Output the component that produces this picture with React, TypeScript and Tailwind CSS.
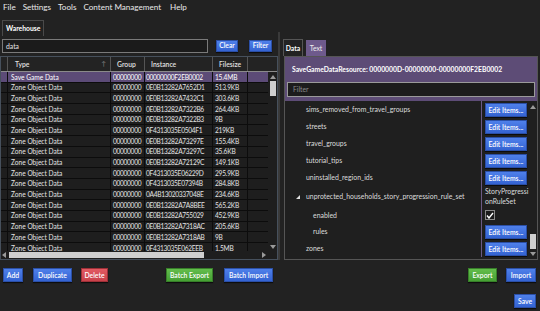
import React from "react";

const rows: [string, string, string, string][] = [
  ["Save Game Data", "00000000", "00000000F2EB0002", "15.4MB"],
  ["Zone Object Data", "00000000", "0E0B13282A7652D1", "513.9KB"],
  ["Zone Object Data", "00000000", "0E0B13282A7432C1", "303.6KB"],
  ["Zone Object Data", "00000000", "0E0B13282A7322B6", "264.4KB"],
  ["Zone Object Data", "00000000", "0E0B13282A7322B3", "9B"],
  ["Zone Object Data", "00000000", "0F4313035E0504F1", "219KB"],
  ["Zone Object Data", "00000000", "0E0B13282A73297E", "155.4KB"],
  ["Zone Object Data", "00000000", "0E0B13282A73297C", "35.6KB"],
  ["Zone Object Data", "00000000", "0E0B13282A72129C", "149.1KB"],
  ["Zone Object Data", "00000000", "0F4313035E06229D", "295.9KB"],
  ["Zone Object Data", "00000000", "0F4313035E07394B", "284.8KB"],
  ["Zone Object Data", "00000000", "0A4B13020337048E", "234.6KB"],
  ["Zone Object Data", "00000000", "0E0B13282A7A8BEE", "565.2KB"],
  ["Zone Object Data", "00000000", "0E0B13282A755029", "452.9KB"],
  ["Zone Object Data", "00000000", "0E0B13282A7318AC", "205.6KB"],
  ["Zone Object Data", "00000000", "0E0B13282A7318AB", "9B"],
  ["Zone Object Data", "00000000", "0F4313035E062EEB", "1.5MB"],
];

function Btn({
  children,
  color,
  className = "",
}: {
  children: React.ReactNode;
  color: "blue" | "red" | "green";
  className?: string;
}) {
  const c =
    color === "blue"
      ? "bg-linear-to-b from-[#4f80ea] to-[#3463d2] border-[#2b4fa6]"
      : color === "red"
      ? "bg-linear-to-b from-[#e25a62] to-[#c9414a] border-[#9e3038]"
      : "bg-linear-to-b from-[#63bd4c] to-[#45a033] border-[#377f29]";
  return (
    <div
      className={`flex items-center justify-center border text-white text-[6.8px] font-semibold whitespace-nowrap shadow-[0_1px_1px_rgba(0,0,0,0.6)] ${c} ${className}`}
    >
      {children}
    </div>
  );
}

function EditBtn() {
  return (
    <Btn color="blue" className="w-[42px] h-[14px] mt-[2px] ml-[3px] font-normal">
      Edit Items...
    </Btn>
  );
}

function TreeRow({
  label,
  h,
  indent = 21,
  children,
  expander = false,
}: {
  label: string;
  h: number;
  indent?: number;
  children?: React.ReactNode;
  expander?: boolean;
}) {
  return (
    <div className="flex overflow-hidden" style={{ height: h }}>
      <div className="w-[196px] relative flex items-center text-[6.9px] text-[#dcdcdc] whitespace-nowrap" style={{ paddingLeft: indent }}>
        {expander && (
          <svg className="absolute left-[11px] top-1/2 -translate-y-1/2" width="4" height="4" viewBox="0 0 4 4">
            <polygon points="4,0 4,4 0,4" fill="#e0e0e0" />
          </svg>
        )}
        {label}
      </div>
      <div className="w-px bg-[#6a5a84]" />
      <div className="w-[47px]">{children}</div>
    </div>
  );
}

export default function App() {
  return (
    <div className="w-[540px] h-[311px] bg-[#222222] text-[#e6e6e6] overflow-hidden flex flex-col [font-family:Lato,sans-serif]">
      {/* menu */}
      <div className="h-[13px] mt-[1px] flex items-center pl-[3px] gap-[7px] text-[8.1px] text-[#e8e8e8]">
        <span>File</span>
        <span>Settings</span>
        <span>Tools</span>
        <span>Content Management</span>
        <span className="ml-[2px]">Help</span>
      </div>
      {/* tab */}
      <div className="h-[16px] mt-[6px] flex pl-[2px]">
        <div className="w-[42px] border border-b-0 border-[#4a4a4a] flex items-center pl-[3px] text-[6.8px] font-bold text-white">
          Warehouse
        </div>
      </div>
      {/* main */}
      <div className="flex h-[224px]">
        {/* left */}
        <div className="w-[278px] flex flex-col">
          <div className="h-[14px] mt-[3px] flex items-center">
            <div className="ml-[2px] w-[206px] h-[14px] border border-[#7a7a7a] bg-[#1b1b1b] flex items-center pl-[3px] text-[6.8px]">
              data
            </div>
            <Btn color="blue" className="ml-[8px] w-[22px] h-[12px] -mt-[1px]">Clear</Btn>
            <Btn color="blue" className="ml-[11px] w-[23px] h-[12px] -mt-[1px]">Filter</Btn>
          </div>
          {/* table */}
          <div className="mt-[3px] w-[278px] h-[204px] border border-[#46505c] flex flex-col bg-[#1e1e1e]">
            {/* header */}
            <div className="h-[15px] flex border-b border-[#8a8a8a] bg-[#232323] text-[6.8px] font-semibold text-[#e0e0e0]">
              <div className="w-[7px] border-r border-[#555]" />
              <div className="w-[103px] border-r border-[#555] flex items-center pl-[7px] justify-between pr-[4px]">
                <span>Type</span>
                <span className="text-[#777] text-[6.5px]">↑</span>
              </div>
              <div className="w-[34px] border-r border-[#555] flex items-center pl-[6px]">Group</div>
              <div className="w-[68px] border-r border-[#555] flex items-center pl-[6px]">Instance</div>
              <div className="w-[35px] border-r border-[#555] flex items-center pl-[6px]">Filesize</div>
              <div className="flex-1" />
            </div>
            <div className="flex flex-1 overflow-hidden">
              <div className="flex-1 overflow-hidden">
                {rows.map((r, i) => {
                  const sel = i === 0;
                  return (
                    <div
                      key={i}
                      className={`h-[10.7px] flex text-[6.6px] leading-none whitespace-nowrap ${
                        sel ? "bg-[#5c4b77] text-white" : "text-[#e4e4e4]"
                      } border-b border-[#0c0c0c]`}
                    >
                      <div className={`w-[7px] border-r border-[#0c0c0c] ${sel ? "" : "bg-[#1e1e1e]"}`} />
                      <div className="w-[103px] border-r border-[#0c0c0c] flex items-center pl-[3px] overflow-hidden">{r[0]}</div>
                      <div className="w-[34px] border-r border-[#0c0c0c] flex items-center pl-[2px] overflow-hidden tracking-[-0.3px]">{r[1]}</div>
                      <div className="w-[68px] border-r border-[#0c0c0c] flex items-center pl-[1px] overflow-hidden tracking-[-0.3px]">{r[2]}</div>
                      <div className="w-[35px] border-r border-[#0c0c0c] flex items-center pl-[2px] overflow-hidden tracking-[-0.2px]">{r[3]}</div>
                      <div className="flex-1" />
                    </div>
                  );
                })}
              </div>
              {/* vscroll */}
              <div className="w-[9px] bg-[#1e1e1e] flex flex-col items-center">
                <svg width="6" height="4" viewBox="0 0 6 4" className="mt-[3px]">
                  <polygon points="3,0 6,4 0,4" fill="#9a9a9a" />
                </svg>
                <div className="w-[6px] h-[15px] bg-[#cfcfcf] mt-[2px]" />
                <div className="flex-1" />
                <svg width="6" height="4" viewBox="0 0 6 4" className="mb-[2px]">
                  <polygon points="0,0 6,0 3,4" fill="#9a9a9a" />
                </svg>
              </div>
            </div>
            {/* hscroll */}
            <div className="h-[8px] flex items-center bg-[#1e1e1e]">
              <svg width="4" height="6" viewBox="0 0 4 6" className="ml-[1px]">
                <polygon points="4,0 4,6 0,3" fill="#9a9a9a" />
              </svg>
              <div className="ml-[3px] w-[195px] h-[6px] bg-[#cfcfcf]" />
              <div className="flex-1" />
              <svg width="4" height="6" viewBox="0 0 4 6" className="mr-[11px]">
                <polygon points="0,0 4,3 0,6" fill="#9a9a9a" />
              </svg>
            </div>
          </div>
        </div>
        {/* splitter */}
        <div className="w-[2px] mt-[-4px] bg-[#3a3a3a]" />
        {/* right */}
        <div className="flex-1 flex flex-col pl-[3px] pr-[2px]">
          <div className="h-[17px] mt-[3px] flex items-end gap-[3px]">
            <div className="w-[20px] h-[17px] border border-b-0 border-[#555] bg-[#222] flex items-center justify-center text-[6.8px] font-bold text-white">
              Data
            </div>
            <div className="w-[20px] h-[16px] bg-[#6e5a8c] flex items-center justify-center text-[6.8px] text-[#eee]">
              Text
            </div>
          </div>
          <div className="ml-[1px] h-[204px] border border-[#555] flex flex-col bg-[#1f1f1f]">
            <div className="h-[44px] bg-[#5d4c76] flex flex-col px-[2px]">
              <div className="h-[25px] flex items-center pl-[5px] text-[6.8px] font-bold text-white whitespace-nowrap">
                SaveGameDataResource: 0000000D-00000000-00000000F2EB0002
              </div>
              <div className="h-[15px] border border-[#9a9a9a] bg-[#1c1c1c] flex items-center pl-[5px] text-[6.8px] text-[#8a8a8a]">
                Filter
              </div>
            </div>
            <div className="flex flex-1 overflow-hidden">
              <div className="flex flex-col">
                <TreeRow label="sims_removed_from_travel_groups" h={17}><EditBtn /></TreeRow>
                <TreeRow label="streets" h={17}><EditBtn /></TreeRow>
                <TreeRow label="travel_groups" h={17}><EditBtn /></TreeRow>
                <TreeRow label="tutorial_tips" h={17}><EditBtn /></TreeRow>
                <TreeRow label="uninstalled_region_ids" h={17}><EditBtn /></TreeRow>
                <TreeRow label="unprotected_households_story_progression_rule_set" h={21} expander>
                  <div className="pl-[3px] pt-[1px] text-[6.9px] leading-[9.5px] text-[#dcdcdc] whitespace-nowrap">
                    StoryProgressi
                    <br />
                    onRuleSet
                  </div>
                </TreeRow>
                <TreeRow label="enabled" h={16} indent={28}>
                  <div className="ml-[3px] mt-[3px] w-[10px] h-[10px] border border-[#8a8a8a] bg-[#1b1b1b] flex items-center justify-center">
                    <svg width="8" height="7" viewBox="0 0 8 7">
                      <polyline points="1,3.5 3,6 7,1" fill="none" stroke="#fff" strokeWidth="1.4" />
                    </svg>
                  </div>
                </TreeRow>
                <TreeRow label="rules" h={17} indent={28}><EditBtn /></TreeRow>
                <TreeRow label="zones" h={17}><EditBtn /></TreeRow>
              </div>
              <div className="flex-1 flex flex-col items-center">
                <svg width="6" height="4" viewBox="0 0 6 4" className="mt-[4px]">
                  <polygon points="3,0 6,4 0,4" fill="#9a9a9a" />
                </svg>
                <div className="flex-1" />
                <div className="w-[6px] h-[15px] bg-[#cfcfcf]" />
                <svg width="6" height="4" viewBox="0 0 6 4" className="mt-[3px] mb-[3px]">
                  <polygon points="0,0 6,0 3,4" fill="#9a9a9a" />
                </svg>
              </div>
            </div>
          </div>
        </div>
      </div>
      {/* bottom buttons */}
      <div className="h-[14px] mt-[8px] flex items-center">
        <Btn color="blue" className="ml-[3px] w-[20px] h-[14px]">Add</Btn>
        <Btn color="blue" className="ml-[10px] w-[39px] h-[14px]">Duplicate</Btn>
        <Btn color="red" className="ml-[9px] w-[27px] h-[14px]">Delete</Btn>
        <Btn color="green" className="ml-[58px] w-[47px] h-[14px]">Batch Export</Btn>
        <Btn color="blue" className="ml-[11px] w-[49px] h-[14px]">Batch Import</Btn>
        <div className="flex-1" />
        <Btn color="green" className="w-[29px] h-[14px]">Export</Btn>
        <Btn color="blue" className="ml-[9px] mr-[4px] w-[30px] h-[14px]">Import</Btn>
      </div>
      <div className="h-[14px] mt-[12px] flex justify-end">
        <Btn color="blue" className="mr-[4px] w-[22px] h-[14px]">Save</Btn>
      </div>
    </div>
  );
}
